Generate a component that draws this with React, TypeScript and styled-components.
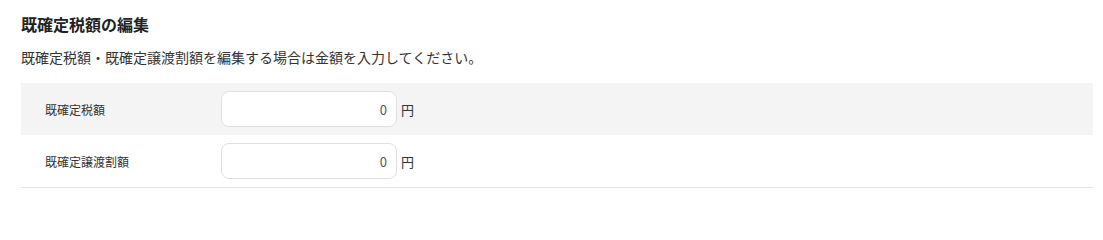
import * as React from 'react'
import styled, { createGlobalStyle } from 'styled-components'

const GlobalStyle = createGlobalStyle`
  html, body {
    margin: 0;
    padding: 0;
    background: #fff;
  }
  body {
    font-family: 'Noto Sans CJK JP', 'Noto Sans', sans-serif;
    color: #333;
  }
`

const Section = styled.section`
  padding: 12px 10px 0 21px;
`

const Title = styled.h2`
  margin: 0;
  font-size: 16px;
  font-weight: 700;
  line-height: 24px;
  color: #222;
`

const Lead = styled.p`
  margin: 9px 0 0;
  font-size: 14px;
  line-height: 24px;
  color: #333;
`

const Table = styled.div`
  margin-top: 14px;
  display: flex;
  flex-direction: column;
  border-bottom: 1px solid #e3e3e3;
`

const Row = styled.div<{ $shaded?: boolean }>`
  display: grid;
  grid-template-columns: 200px 1fr;
  align-items: center;
  height: 52px;
  background: ${(p) => (p.$shaded ? '#f5f4f4' : '#fff')};
`

const Label = styled.div`
  padding-left: 24px;
  font-size: 12px;
  color: #333;
`

const Field = styled.div`
  display: flex;
  align-items: center;
  gap: 4px;
`

const AmountInput = styled.input`
  box-sizing: border-box;
  width: 176px;
  height: 36px;
  padding: 0 9px;
  border: 1px solid #e0e0e0;
  border-radius: 8px;
  background: #fff;
  text-align: right;
  font-family: 'Noto Sans CJK JP', 'Noto Sans', sans-serif;
  font-size: 13px;
  color: #555;
  outline: none;
`

const Unit = styled.span`
  font-size: 13px;
  color: #333;
`

const rows = [
  { label: '既確定税額', value: '0' },
  { label: '既確定譲渡割額', value: '0' },
]

const App = () => {
  return (
    <>
      <GlobalStyle />
      <Section>
        <Title>既確定税額の編集</Title>
        <Lead>既確定税額・既確定譲渡割額を編集する場合は金額を入力してください。</Lead>
        <Table>
          {rows.map((row, i) => (
            <Row key={row.label} $shaded={i === 0}>
              <Label>{row.label}</Label>
              <Field>
                <AmountInput defaultValue={row.value} />
                <Unit>円</Unit>
              </Field>
            </Row>
          ))}
        </Table>
      </Section>
    </>
  )
}

export default App
